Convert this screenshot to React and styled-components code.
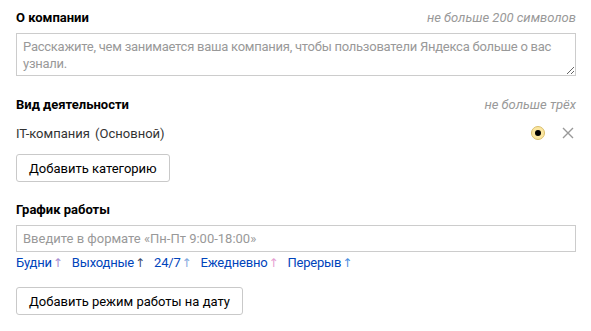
import React from 'react';
import styled, { createGlobalStyle } from 'styled-components';

const Global = createGlobalStyle`
	body {
		margin: 0;
		background: #fff;
		font-family: Roboto, "Liberation Sans", sans-serif;
		font-size: 13px;
		color: #000;
	}
`;

const Page = styled.div`
	padding: 10px 15px 0 16px;
	display: flex;
	flex-direction: column;
`;

const Section = styled.div`
	display: flex;
	flex-direction: column;
	margin-bottom: ${(p) => p.gap || 0}px;
`;

const HeadRow = styled.div`
	display: flex;
	justify-content: space-between;
	align-items: baseline;
	line-height: 16px;
	margin-bottom: ${(p) => p.space || 7}px;
`;

const Title = styled.div`
	font-weight: 700;
	font-size: 13px;
	color: #000;
`;

const Hint = styled.div`
	font-style: italic;
	color: #999;
	font-size: 13px;
`;

const Area = styled.textarea`
	box-sizing: border-box;
	width: 100%;
	height: 43px;
	border: 1px solid #ccc;
	border-radius: 0;
	padding: 4px 2px 4px 6px;
	font-family: inherit;
	font-size: 13px;
	letter-spacing: -0.25px;
	line-height: 17px;
	color: #000;
	resize: vertical;
	outline: none;
	&::placeholder {
		color: #999;
	}
`;

const Field = styled.input`
	box-sizing: border-box;
	width: 100%;
	height: 27px;
	border: 1px solid #ccc;
	padding: 0 6px;
	font-family: inherit;
	font-size: 13px;
	outline: none;
	&::placeholder {
		color: #999;
	}
`;

const CategoryRow = styled.div`
	display: flex;
	align-items: center;
	height: 20px;
	margin-bottom: 11px;
	color: #333;
`;

const CategoryName = styled.span`
	flex: 1;
	word-spacing: 2px;
`;

const Radio = styled.span`
	box-sizing: border-box;
	width: 14px;
	height: 14px;
	border-radius: 50%;
	background: #fbe6a0;
	border: 1px solid #d9be6c;
	display: flex;
	align-items: center;
	justify-content: center;
	margin-right: 17px;
	&::after {
		content: '';
		width: 6px;
		height: 6px;
		border-radius: 50%;
		background: #000;
	}
`;

const Close = styled.svg`
	width: 12px;
	height: 12px;
	margin-right: 2px;
`;

const Button = styled.button`
	align-self: flex-start;
	box-sizing: border-box;
	height: 28px;
	padding: 0 12px;
	background: #fff;
	border: 1px solid #c9c9c9;
	border-radius: 3px;
	font-family: inherit;
	font-size: 13px;
	color: #000;
	cursor: pointer;
`;

const Links = styled.div`
	display: flex;
	gap: 11px;
	line-height: 16px;
	letter-spacing: -0.2px;
	margin: 3px 0 16px;
`;

const Link = styled.a`
	color: #0044bb;
	text-decoration: none;
	white-space: nowrap;
`;

const Arrow = styled.span`
	display: inline-block;
	width: 8px;
	margin-left: 1px;
	text-align: center;
	font-family: "DejaVu Sans", sans-serif;
	font-size: 12px;
	color: ${(p) => p.tone};
`;

const presets = [
	{ label: 'Будни', tone: '#a98ed0' },
	{ label: 'Выходные', tone: '#3d4a6a' },
	{ label: '24/7', tone: '#7fa8de' },
	{ label: 'Ежедневно', tone: '#e6a0d2' },
	{ label: 'Перерыв', tone: '#4a8de0' },
];

const App = () => (
	<Page>
		<Global />
		<Section gap={21}>
			<HeadRow>
				<Title>О компании</Title>
				<Hint>не больше 200 символов</Hint>
			</HeadRow>
			<Area placeholder="Расскажите, чем занимается ваша компания, чтобы пользователи Яндекса больше о вас узнали." />
		</Section>

		<Section gap={20}>
			<HeadRow space={10}>
				<Title>Вид деятельности</Title>
				<Hint>не больше трёх</Hint>
			</HeadRow>
			<CategoryRow>
				<CategoryName>IT-компания (Основной)</CategoryName>
				<Radio />
				<Close viewBox="0 0 12 12">
					<path d="M1 1 L11 11 M11 1 L1 11" stroke="#999" strokeWidth="1.4" />
				</Close>
			</CategoryRow>
			<Button>Добавить категорию</Button>
		</Section>

		<Section>
			<HeadRow>
				<Title>График работы</Title>
			</HeadRow>
			<Field placeholder="Введите в формате «Пн-Пт 9:00-18:00»" />
			<Links>
				{presets.map((p) => (
					<Link key={p.label} href="#">
						{p.label}
						<Arrow tone={p.tone}>↑</Arrow>
					</Link>
				))}
			</Links>
			<Button>Добавить режим работы на дату</Button>
		</Section>
	</Page>
);

export default App;
